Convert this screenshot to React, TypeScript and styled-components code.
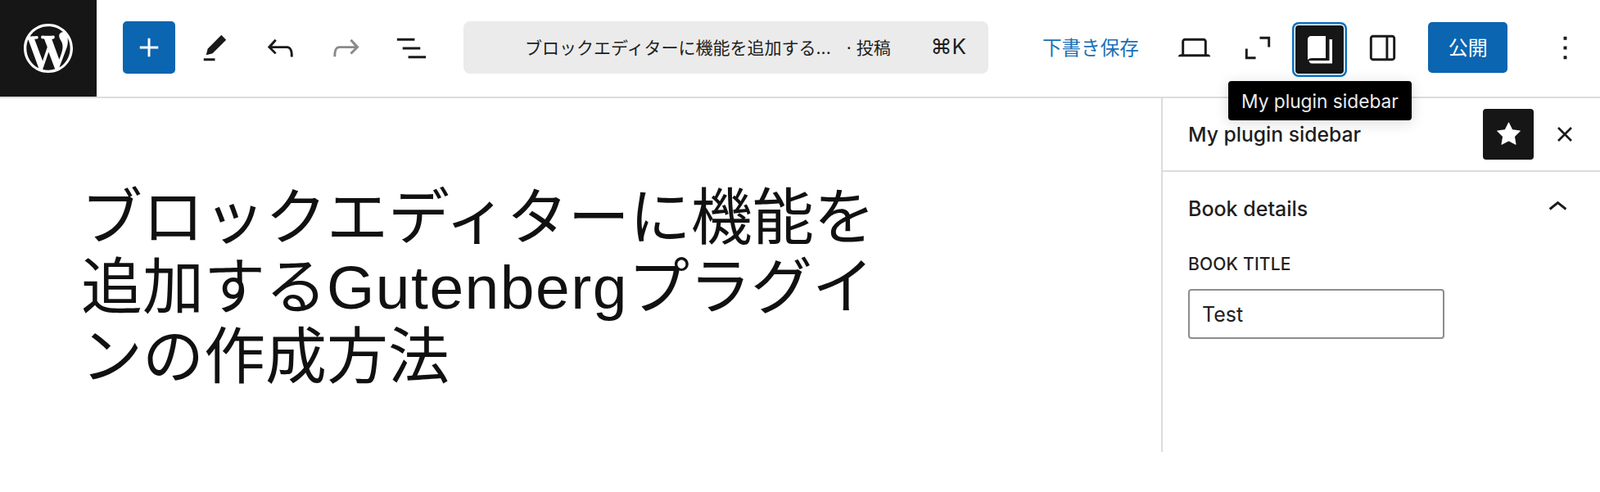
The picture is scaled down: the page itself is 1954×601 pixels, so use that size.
import React from 'react';
import styled, { createGlobalStyle } from 'styled-components';

const Global = createGlobalStyle`
  html, body { margin: 0; padding: 0; background: #fff; }
  body { font-family: Inter, "Noto Sans CJK JP", sans-serif; color: #1e1e1e; }
  * { box-sizing: border-box; }
`;

const Page = styled.div`
  width: 1954px;
  height: 601px;
  overflow: hidden;
  background: #fff;
`;

const Header = styled.header`
  display: flex;
  align-items: center;
  height: 120px;
  padding-bottom: 2px;
  border-bottom: 2px solid #dcdcdc;
`;

const Logo = styled.div`
  display: flex;
  align-items: center;
  justify-content: center;
  align-self: flex-start;
  width: 118px;
  height: 118px;
  background: #161616;
  color: #fff;
`;

const LeftTools = styled.div`
  display: flex;
  align-items: center;
  gap: 16px;
  margin-left: 32px;
`;

const IconButton = styled.button<{ $muted?: boolean }>`
  display: flex;
  align-items: center;
  justify-content: center;
  width: 64px;
  height: 64px;
  padding: 0;
  border: 0;
  border-radius: 4px;
  background: transparent;
  color: ${(p) => (p.$muted ? '#8a8a8a' : '#1a1a1a')};
`;

const AddButton = styled(IconButton)`
  background: #0b65b0;
  border-radius: 5px;
  color: #fff;
`;

const CommandBar = styled.div`
  display: flex;
  align-items: center;
  width: 641px;
  height: 64px;
  margin-left: 32px;
  padding: 0 27px 3px 75px;
  border-radius: 8px;
  background: #ebebeb;
  color: #1e1e1e;
  font-size: 21px;
`;

const CommandTitle = styled.span`
  white-space: nowrap;
`;

const PostType = styled.span`
  margin-left: 19px;
`;

const Shortcut = styled.span`
  margin-left: auto;
  font-size: 26px;
`;

const RightTools = styled.div`
  display: flex;
  align-items: center;
  margin-left: auto;
  padding-right: 11px;
  gap: 12.7px;
`;

const SaveLink = styled.span`
  margin-right: 23px;
  padding-bottom: 3px;
  color: #1a6fb5;
  font-size: 23.6px;
`;

const TooltipAnchor = styled.div`
  position: relative;
  display: flex;
  height: 64px;
`;

const ActiveButton = styled(IconButton)`
  width: 59px;
  height: 59px;
  margin: 5px 2.5px 0;
  background: #161616;
  color: #fff;
  box-shadow: 0 0 0 1.5px #fff, 0 0 0 4px #0f6fbd;
`;

const Tooltip = styled.div`
  position: absolute;
  top: 73px;
  left: 50%;
  transform: translateX(-50%);
  z-index: 3;
  width: 224px;
  height: 48px;
  display: flex;
  align-items: center;
  justify-content: center;
  border-radius: 4px;
  background: #000;
  color: #ececec;
  font-size: 22.7px;
  white-space: nowrap;
  box-shadow: 0 3px 18px rgba(0, 0, 0, 0.14);
`;

const PublishButton = styled.button`
  width: 97px;
  height: 62px;
  margin-left: 11px;
  padding: 0 0 3px;
  border: 0;
  border-radius: 5px;
  background: #0b65b0;
  color: #fff;
  font: 24px Inter, "Noto Sans CJK JP", sans-serif;
`;

const MoreButton = styled(IconButton)`
  margin-left: 25px;
`;

const Body = styled.div`
  display: flex;
  height: 432px;
`;

const Editor = styled.main`
  flex: 1;
  padding: 104px 0 0 99px;
`;

const PostTitle = styled.h1`
  width: 985px;
  margin: 0;
  color: #111;
  font-family: "Liberation Sans", "Noto Sans CJK JP", sans-serif;
  font-size: 75px;
  font-weight: 400;
  line-height: 85px;
`;

const LatinWord = styled.span`
  letter-spacing: 1.5px;
`;

const Sidebar = styled.aside`
  width: 536px;
  border-left: 2px solid #dcdcdc;
`;

const SidebarHeader = styled.div`
  display: flex;
  align-items: center;
  height: 90px;
  padding: 0 11px 0 31px;
  border-bottom: 2px solid #dcdcdc;
`;

const SidebarTitle = styled.h2`
  flex: 1;
  margin: 0;
  font-size: 24.7px;
  font-weight: 500;
`;

const StarButton = styled(IconButton)`
  width: 62px;
  height: 62px;
  background: #161616;
  color: #fff;
`;

const CloseButton = styled(IconButton)`
  margin-left: 6px;
`;

const Panel = styled.section`
  padding: 0 32px 0 31px;
`;

const PanelHead = styled.div`
  display: flex;
  align-items: center;
  justify-content: space-between;
  height: 90px;
`;

const PanelTitle = styled.h3`
  margin: 0;
  font-size: 25px;
  font-weight: 500;
`;

const PanelChevron = styled.span`
  display: flex;
  margin: -4px -4px 0 0;
  color: #1a1a1a;
`;

const FieldLabel = styled.label`
  display: block;
  margin-top: 9px;
  font-size: 21px;
  font-weight: 500;
  line-height: 28px;
  letter-spacing: 0.2px;
  text-transform: uppercase;
`;

const TextInput = styled.input`
  display: block;
  width: 313px;
  height: 61px;
  margin-top: 16px;
  padding: 0 15px;
  border: 2px solid #8d8d8d;
  border-radius: 4px;
  color: #1e1e1e;
  font: 25px Inter, "Noto Sans CJK JP", sans-serif;
  outline: none;
`;

const Icon = ({ d, size = 47 }: { d: string; size?: number }) => (
  <svg width={size} height={size} viewBox="0 0 24 24" fill="currentColor" aria-hidden="true">
    <path d={d} />
  </svg>
);

const WP =
  'M20 10c0-5.51-4.49-10-10-10C4.48 0 0 4.49 0 10c0 5.52 4.48 10 10 10 5.51 0 10-4.48 10-10zM7.78 15.37L4.37 6.22c.55-.02 1.17-.08 1.17-.08.5-.06.44-1.13-.06-1.11 0 0-1.45.11-2.37.11-.18 0-.37 0-.58-.01C4.12 2.69 6.87 1.11 10 1.11c2.33 0 4.45.87 6.05 2.34-.68-.11-1.65.39-1.65 1.58 0 .74.45 1.36.9 2.1.35.61.55 1.36.55 2.46 0 1.49-1.4 5-1.4 5l-3.03-8.37c.54-.02.82-.17.82-.17.5-.05.44-1.25-.06-1.22 0 0-1.44.12-2.38.12-.87 0-2.33-.12-2.33-.12-.5-.03-.56 1.2-.06 1.22l.92.08 1.26 3.41-1.77 5.24zM17.41 10c.24-.64.74-1.87.43-4.25.7 1.29 1.05 2.71 1.05 4.25 0 3.29-1.73 6.24-4.4 7.78.97-2.59 1.94-5.2 2.92-7.78zM6.1 18.09C3.12 16.65 1.11 13.53 1.11 10c0-1.3.23-2.48.72-3.59C3.25 10.3 4.67 14.2 6.1 18.09zm4.03-6.63l2.58 6.98c-.86.29-1.76.45-2.71.45-.79 0-1.57-.11-2.29-.33.81-2.38 1.62-4.74 2.42-7.1z';
const PLUS = 'M11 12.5V17.5H12.5V12.5H17.5V11H12.5V6H11V11H6V12.5H11Z';
const PENCIL = 'm19 7-3-3-8.5 8.5-1 4 4-1L19 7Zm-7 11.5H5V20h7v-1.5Z';
const UNDO =
  'M18.3 11.7c-.6-.6-1.4-.9-2.3-.9H6.7l2.9-3.3-1.1-1-4.5 5L8.5 16l1-1-2.7-2.7H16c.5 0 .9.2 1.3.5 1 1 1 3.4 1 4.5v.3h1.5v-.2c0-1.5 0-4.3-1.5-5.7z';
const REDO =
  'M15.6 6.5l-1.1 1 2.9 3.3H8c-.9 0-1.7.3-2.3.9-1.4 1.5-1.4 4.2-1.4 5.6v.2h1.5v-.3c0-1.1 0-3.5 1-4.5.3-.3.7-.5 1.3-.5h9.2L14.5 15l1.1 1.1 4.6-4.6-4.6-5z';
const LIST = 'M3 6h11v1.5H3V6Zm3.5 5.5h11V13h-11v-1.5ZM21 17H10v1.5h11V17Z';
const LAPTOP =
  'M20.5 16h-.7V8c0-1.1-.9-2-2-2H6.2c-1.1 0-2 .9-2 2v8h-.7c-.8 0-1.5.7-1.5 1.5h20c0-.8-.7-1.5-1.5-1.5zM5.7 8c0-.3.2-.5.5-.5h11.6c.3 0 .5.2.5.5v8H5.7V8z';
const CORNERS = 'M13.5 5H20v6.5h-1.5v-5h-5V5ZM4.5 12.5H6v5h5V19H4.5v-6.5Z';
const SIDEBAR =
  'M18 4H6c-1.1 0-2 .9-2 2v12c0 1.1.9 2 2 2h12c1.1 0 2-.9 2-2V6c0-1.1-.9-2-2-2zm-4 14.5H6c-.3 0-.5-.2-.5-.5V6c0-.3.2-.5.5-.5h8v13zm4.5-.5c0 .3-.2.5-.5.5h-2.5v-13H18c.3 0 .5.2.5.5v12z';
const STAR =
  'M11.776 4.454a.25.25 0 0 1 .448 0l2.069 4.192a.25.25 0 0 0 .188.137l4.626.672a.25.25 0 0 1 .139.426l-3.348 3.263a.25.25 0 0 0-.072.222l.79 4.607a.25.25 0 0 1-.362.263l-4.138-2.175a.25.25 0 0 0-.232 0l-4.138 2.175a.25.25 0 0 1-.363-.263l.79-4.607a.25.25 0 0 0-.071-.222L4.754 9.881a.25.25 0 0 1 .139-.426l4.626-.672a.25.25 0 0 0 .188-.137l2.069-4.192Z';
const CHEVRON = 'M6.5 12.4L12 8l5.5 4.4-.9 1.2L12 10l-4.5 3.6-1-1.2z';
const MORE = 'M13 19h-2v-2h2v2zm0-6h-2v-2h2v2zm0-6h-2V5h2v2z';

const BookIcon = () => (
  <svg width={48} height={48} viewBox="0 0 48 48" fill="currentColor" aria-hidden="true">
    <path d="M13 7h18v27H14c-2 0-3.5.8-5 2V11c0-2.2 1.8-4 4-4Z" />
    <path d="M35.5 11H39v29.5H14c-1.8 0-3-1-3.5-3.5H35.5V11Z" />
  </svg>
);

const CloseIcon = () => (
  <svg width={20} height={20} viewBox="0 0 20 20" stroke="currentColor" strokeWidth={2.6} aria-hidden="true">
    <path d="M2 2 18 18M18 2 2 18" />
  </svg>
);

export default function App() {
  return (
    <Page>
      <Global />
      <Header>
        <Logo>
          <svg width={60} height={60} viewBox="0 0 20 20" fill="currentColor" aria-hidden="true">
            <path d={WP} />
          </svg>
        </Logo>
        <LeftTools>
          <AddButton><Icon d={PLUS} /></AddButton>
          <IconButton><Icon d={PENCIL} /></IconButton>
          <IconButton><Icon d={UNDO} /></IconButton>
          <IconButton $muted><Icon d={REDO} /></IconButton>
          <IconButton><Icon d={LIST} /></IconButton>
        </LeftTools>
        <CommandBar>
          <CommandTitle>ブロックエディターに機能を追加する...</CommandTitle>
          <PostType>· 投稿</PostType>
          <Shortcut>⌘K</Shortcut>
        </CommandBar>
        <RightTools>
          <SaveLink>下書き保存</SaveLink>
          <IconButton><Icon d={LAPTOP} /></IconButton>
          <IconButton><Icon d={CORNERS} /></IconButton>
          <TooltipAnchor>
            <ActiveButton><BookIcon /></ActiveButton>
            <Tooltip>My plugin sidebar</Tooltip>
          </TooltipAnchor>
          <IconButton><Icon d={SIDEBAR} /></IconButton>
          <PublishButton>公開</PublishButton>
          <MoreButton><Icon d={MORE} /></MoreButton>
        </RightTools>
      </Header>
      <Body>
        <Editor>
          <PostTitle>
            ブロックエディターに機能を追加する<LatinWord>Gutenberg</LatinWord>プラグインの作成方法
          </PostTitle>
        </Editor>
        <Sidebar>
          <SidebarHeader>
            <SidebarTitle>My plugin sidebar</SidebarTitle>
            <StarButton><Icon d={STAR} /></StarButton>
            <CloseButton><CloseIcon /></CloseButton>
          </SidebarHeader>
          <Panel>
            <PanelHead>
              <PanelTitle>Book details</PanelTitle>
              <PanelChevron><Icon d={CHEVRON} size={47} /></PanelChevron>
            </PanelHead>
            <FieldLabel htmlFor="book-title">Book title</FieldLabel>
            <TextInput id="book-title" defaultValue="Test" />
          </Panel>
        </Sidebar>
      </Body>
    </Page>
  );
}
